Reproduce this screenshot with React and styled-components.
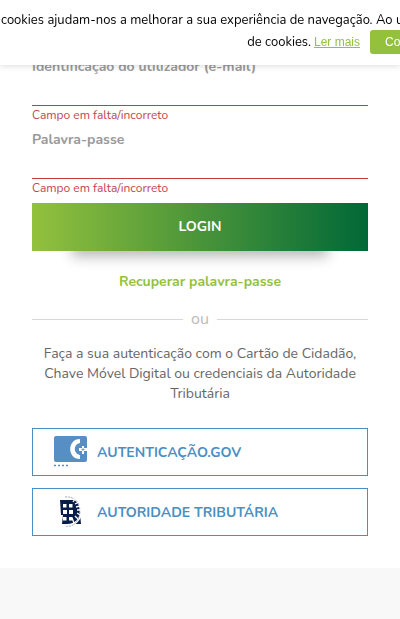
import React from "react";
import styled, { createGlobalStyle } from "styled-components";

const GlobalStyle = createGlobalStyle`
  *, *::before, *::after { box-sizing: border-box; }
  body {
    margin: 0;
    background: #f8f8f8;
    color: #666;
    font-family: Nunito, Lato, "Open Sans", sans-serif;
    font-size: 14px;
    line-height: 20px;
  }
`;

const CookieBar = styled.aside`
  position: fixed;
  inset: 0 0 auto;
  z-index: 10;
  padding: 8px 0 11px 1px;
  overflow: hidden;
  background: #fff;
  color: #000;
  font-size: 13px;
  line-height: 24px;
  white-space: nowrap;
  box-shadow: 0 1px 6px rgba(0, 0, 0, 0.14);
`;

const CookieText = styled.p`
  margin: 0;
  line-height: 22px;
  padding-top: 1px;
  margin-bottom: -1px;
`;

const CookieActions = styled.div`
  display: flex;
  align-items: center;
  justify-content: flex-end;
`;

const MoreLink = styled.a`
  margin: 0 10px 0 3px;
  color: #93c13d;
  font: 12px/24px "Liberation Sans", Arial, sans-serif;
`;

const AcceptButton = styled.button`
  width: 30px;
  height: 24px;
  padding: 0 0 0 15px;
  overflow: hidden;
  border: 0;
  border-radius: 3px 0 0 3px;
  background: #93c13d;
  color: #fff;
  font: 12px/24px "Liberation Sans", Arial, sans-serif;
  text-align: left;
`;

const Card = styled.main`
  padding: 57px 32px 32px;
  background: #fff;
  box-shadow: 0 1px 5px rgba(0, 0, 0, 0.12);
`;

const Field = styled.div`
  display: flex;
  flex-direction: column;
  margin-bottom: 6px;
`;

const Label = styled.label`
  color: #999;
  font-size: 14px;
  font-weight: 700;
`;

const Input = styled.input`
  width: 100%;
  height: 29px;
  padding: 0;
  border: 0;
  border-bottom: 1px solid #c83b42;
  border-radius: 0;
  outline: 0;
  background: transparent;
  font: inherit;
`;

const FieldError = styled.span`
  color: #c4454f;
  font-size: 12px;
  line-height: 18px;
`;

const SubmitArea = styled.div`
  position: relative;
  z-index: 0;

  &::after {
    content: "";
    position: absolute;
    z-index: -1;
    inset: 10px 12% 0;
    box-shadow: 0 5px 14px rgba(0, 0, 0, 0.3);
  }
`;

const LoginButton = styled.button`
  display: block;
  width: 100%;
  height: 48px;
  border: 0;
  background: linear-gradient(90deg, #93c13d, #006837);
  color: #fff;
  font: inherit;
  font-weight: 700;
`;

const RecoverLink = styled.a`
  display: block;
  margin: 21px 0 17px;
  color: #93c13d;
  font-weight: 700;
  text-align: center;
  text-decoration: none;
`;

const Divider = styled.div`
  display: flex;
  align-items: center;
  gap: 8px;
  height: 21px;
  color: #bbb;
  font-size: 16px;
  line-height: 23px;

  &::before,
  &::after {
    content: "";
    flex: 1;
    height: 1px;
    background: #d8d8d8;
  }
`;

const Intro = styled.p`
  margin: 14px 0 24px;
  text-align: center;
`;

const Providers = styled.div`
  display: grid;
  gap: 12px;
`;

const ProviderButton = styled.button`
  display: flex;
  align-items: center;
  gap: 8px;
  height: 48px;
  padding: 0 20px;
  border: 1px solid #498fc5;
  background: #fff;
  color: #498fc5;
  font: inherit;
  font-weight: 700;

  svg { flex: none; }
`;

const ProviderName = styled.span`
  padding-top: 2px;
`;

function AuthIcon() {
  return (
    <svg width="36" height="36" viewBox="0 0 36 36" aria-hidden="true">
      <rect x="1" y="2" width="33" height="26" rx="2" fill="#578fc4" />
      <path d="M27 5v4c-7 1-7 11 0 12v4C14 25 14 5 27 5Z" fill="#fff" />
      <path d="M29 12h2v2h3v3h-3v3h-2v-3h-3v-3h3Z" fill="#fff" />
      <path d="M28.500 15.500h3M30 14v3" stroke="#578fc4" strokeWidth="0.8" />
      <path d="M1 31.500h2m2 0h2m2 0h2m2 0h2" stroke="#578fc4" strokeWidth="1.300" />
    </svg>
  );
}

function TaxIcon() {
  return (
    <svg width="36" height="36" viewBox="0 0 36 36" aria-hidden="true">
      <path d="M7 6h16l3 4 2 20H9l1-9H8Z" fill="#071c48" />
      <path d="M14 3c8 0 14 6 14 14s-5 14-14 14" fill="none" stroke="#fff" strokeWidth="2" />
      <path d="M12 3c9-1 15 5 15 14S21 34 12 32" fill="none" stroke="#a4acbd" strokeWidth="1" strokeDasharray="2 1" />
      <path d="M10 10h3.500v3.500H10Zm6 0h3.500v3.500H16Zm-6 6h4v4h-4Zm6 0h4v4h-4Zm-6 7h3.500v3.500H10Zm6 0h3.500v3.500H16Z" fill="#fff" />
      <path d="m20 8 2-3m0 5 4-2m-3 5 4-1m-3 4h4m-4 3 3 2m-5 1 3 3m-6-1 2 5" stroke="#fff" strokeWidth="1.300" />
    </svg>
  );
}

const fields = [
  { id: "email", label: "Identificação do utilizador (e-mail)", type: "email" },
  { id: "password", label: "Palavra-passe", type: "password" },
];

export default function App() {
  return (
    <>
      <GlobalStyle />
      <CookieBar>
        <CookieText>
          cookies ajudam-nos a melhorar a sua experiência de navegação. Ao utilizar
        </CookieText>
        <CookieActions>
          <span>de cookies.</span>
          <MoreLink href="#cookies">Ler mais</MoreLink>
          <AcceptButton type="button">Continuar</AcceptButton>
        </CookieActions>
      </CookieBar>
      <Card>
        <form onSubmit={(event) => event.preventDefault()}>
          {fields.map((field) => (
            <Field key={field.id}>
              <Label htmlFor={field.id}>{field.label}</Label>
              <Input id={field.id} type={field.type} aria-invalid="true" aria-describedby={`${field.id}-error`} />
              <FieldError id={`${field.id}-error`}>Campo em falta/incorreto</FieldError>
            </Field>
          ))}
          <SubmitArea>
            <LoginButton type="submit">LOGIN</LoginButton>
          </SubmitArea>
        </form>
        <RecoverLink href="#recuperar">Recuperar palavra-passe</RecoverLink>
        <Divider>ou</Divider>
        <Intro>
          Faça a sua autenticação com o Cartão de Cidadão, Chave Móvel Digital ou credenciais da Autoridade Tributária
        </Intro>
        <Providers>
          <ProviderButton type="button"><AuthIcon /><ProviderName>AUTENTICAÇÃO.GOV</ProviderName></ProviderButton>
          <ProviderButton type="button"><TaxIcon /><ProviderName>AUTORIDADE TRIBUTÁRIA</ProviderName></ProviderButton>
        </Providers>
      </Card>
    </>
  );
}
